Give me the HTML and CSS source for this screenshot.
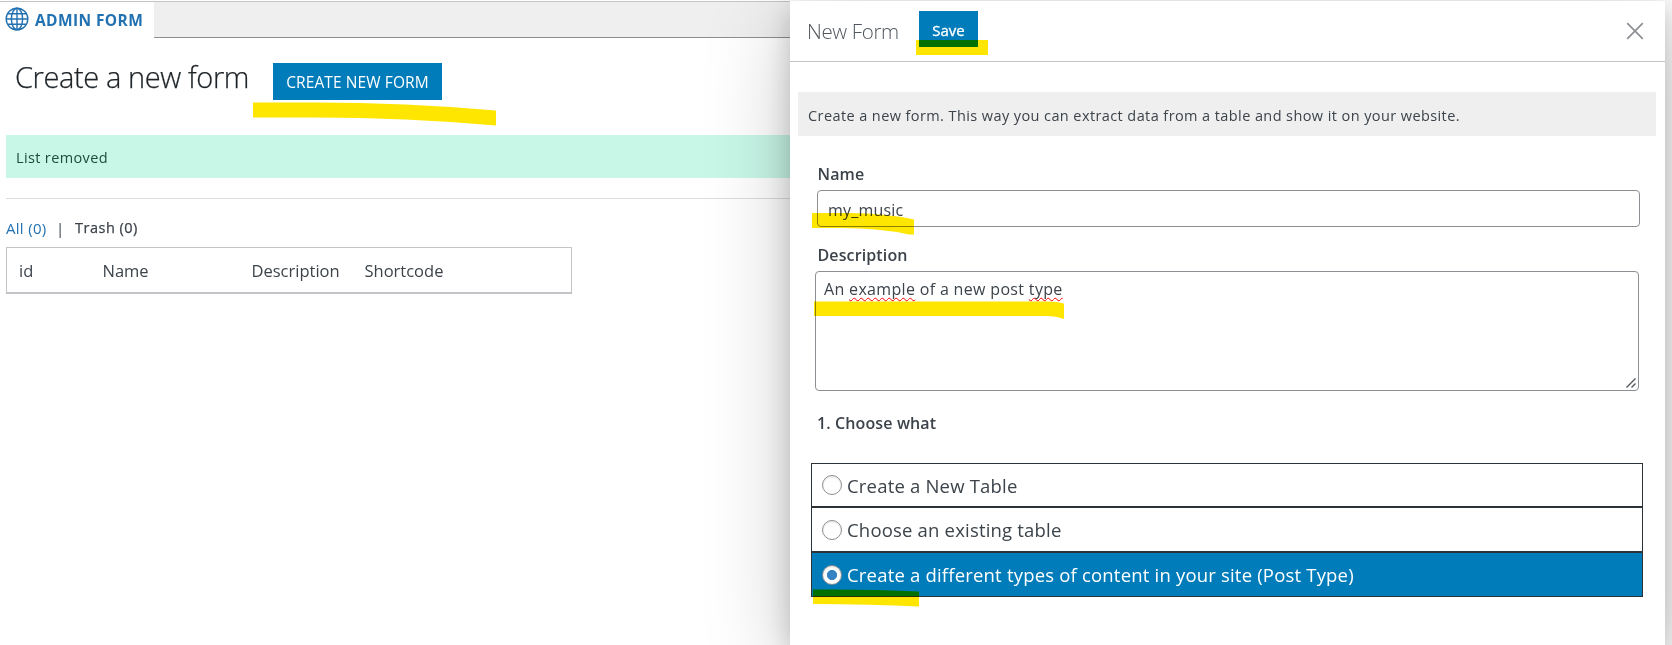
FILE: index.html
```html
<!DOCTYPE html>
<html lang="en">
<head>
<meta charset="utf-8">
<title>Admin Form</title>
<link rel="stylesheet" href="styles.css">
</head>
<body>
<div class="app">
  <main class="page">
    <nav class="tabs">
      <a class="tab">
        <svg class="globe" viewBox="0 0 24 24"><circle cx="12" cy="12" r="10.8"/><ellipse cx="12" cy="12" rx="5.6" ry="10.8"/><path d="M12 1.2v21.6M1.2 12h21.6M2.8 6.8h18.4M2.8 17.2h18.4"/></svg>
        <span class="tab-text">ADMIN FORM</span>
      </a>
      <div class="tab-fill"></div>
    </nav>
    <header class="heading">
      <h1 class="title">Create a new form</h1>
      <button class="btn create">CREATE NEW FORM</button>
    </header>
    <div class="notice"><span class="notice-text">List removed</span></div>
    <div class="filters"><a class="all">All (0)</a><span class="bar">|</span><span class="trash">Trash (0)</span></div>
    <div class="table">
      <span class="c-id">id</span><span class="c-name">Name</span><span class="c-desc">Description</span><span class="c-code">Shortcode</span>
    </div>
  </main>
  <section class="panel">
    <header class="panel-head">
      <h2 class="panel-title">New Form</h2>
      <button class="btn save">Save</button>
      <svg class="close" viewBox="0 0 18 18"><path d="M1.2 1.2l15.6 15.6M16.8 1.2L1.2 16.8"/></svg>
    </header>
    <div class="info"><span class="info-text">Create a new form. This way you can extract data from a table and show it on your website.</span></div>
    <div class="label name-label"><span>Name</span></div>
    <div class="input"><span>my_music</span></div>
    <div class="label desc-label"><span>Description</span></div>
    <div class="area">
      <span class="area-text">An <u class="typo">example</u> of a new post <u class="typo">type</u></span>
      <svg class="grip" viewBox="0 0 10 10"><path d="M.5 9.5l9-9M5.5 9.5l4-4"/></svg>
    </div>
    <div class="label choose"><span>1. Choose what</span></div>
    <div class="options">
      <div class="option"><i class="radio"></i><span>Create a New Table</span></div>
      <div class="option"><i class="radio"></i><span>Choose an existing table</span></div>
      <div class="option selected"><i class="radio"></i><span>Create a different types of content in your site (Post Type)</span></div>
    </div>
  </section>
  <svg class="marker" viewBox="0 0 1672 645">
    <path d="M253 102.5H315Q405 102.5 496 110.5V125.5Q405 117.5 315 117.5H253Z"/>
    <path d="M916 40H988V55H916Z"/>
    <path d="M812 213H850Q885 213 914 219.5V234.5H909Q880 228 842 228H812Z"/>
    <path d="M814 301.5H1046Q1058 301.5 1064 303.5V319Q1056 316 1046 316H814Z"/>
    <path d="M813 589.5Q870 589 919 591.5V606.5Q870 604 813 604Z"/>
  </svg>
</div>
</body>
</html>
```
FILE: styles.css
```css
* { box-sizing: border-box; }
body { margin: 0; background: #fff; font-family: "Open Sans", "Noto Sans", sans-serif; color: #3c434a; }
h1, h2 { margin: 0; }
.app { position: relative; display: flex; width: 1672px; height: 645px; overflow: hidden; padding-top: 1px; }
.page { width: 790px; flex: none; border-top: 1px solid #c3c4c7; }
.tabs { display: flex; height: 36px; }
.tab { width: 154px; display: flex; align-items: center; padding-left: 5px; color: #2271b1; white-space: nowrap; }
.globe { width: 24px; height: 24px; margin: -2px 6px 0 0; fill: none; stroke: #2271b1; stroke-width: 1.4; }
.tab-text { font-size: 15.5px; font-weight: 700; letter-spacing: .4px; }
.tab-fill { flex: 1; background: #efefef; border-bottom: 1px solid #8c8f94; }
.heading { display: flex; align-items: flex-start; height: 97px; padding-left: 15px; }
.title { width: 258px; padding-top: 19px; font-size: 29px; line-height: 40px; font-weight: 300; color: #1d2327; white-space: nowrap; letter-spacing: -.4px; -webkit-text-stroke: .25px #1d2327; }
.btn { border: 0; padding: 0; background: #007cba; color: #fff; font-family: inherit; white-space: nowrap; }
.create { width: 169px; height: 37px; margin-top: 25px; padding-top: 1px; font-size: 15.5px; letter-spacing: .1px; }
.notice { margin-left: 6px; height: 43px; padding-left: 10px; background: #c8f7e8; color: #1f4a3d; font-size: 14.5px; line-height: 46px; letter-spacing: .36px; }
.filters { margin: 20px 0 0 6px; height: 49px; border-top: 1px solid #dcdcde; display: flex; padding-top: 18px; font-size: 15px; line-height: 22px; white-space: nowrap; }
.all { width: 50px; color: #2271b1; letter-spacing: .3px; }
.bar { width: 19px; }
.trash { font-size: 14.5px; font-weight: 500; letter-spacing: .5px; -webkit-text-stroke: .25px #3c434a; }
.table { margin-left: 6px; width: 566px; height: 47px; border: 1px solid #c3c4c7; border-bottom-width: 2px; display: grid; grid-template-columns: 83.5px 149px 113px 1fr; padding-left: 12px; font-size: 16.5px; line-height: 45px; }
.panel { width: 875px; flex: none; background: #fff; box-shadow: 0 20px 80px rgba(0,0,0,.22), 0 8px 24px rgba(0,0,0,.18); display: flex; flex-direction: column; }
.panel-head { flex: none; display: flex; height: 61px; border-bottom: 1px solid #c3c4c7; padding: 10px 21px 0 17px; }
.panel-title { width: 112px; font-size: 20.5px; line-height: 40px; font-weight: 300; color: #50575e; white-space: nowrap; letter-spacing: -.35px; }
.save { width: 59px; height: 36px; padding-top: 1px; font-size: 15px; font-weight: 500; -webkit-text-stroke: .3px #fff; }
.close { width: 18px; height: 18px; margin: 11px 0 0 auto; fill: none; stroke: #8c8f94; stroke-width: 1.7; }
.info { flex: none; margin: 30px 9px 0 8px; height: 44px; padding-left: 10px; background: #efefef; font-size: 14.5px; line-height: 48px; white-space: nowrap; letter-spacing: .41px; }
.label { flex: none; padding-left: 27.5px; font-size: 16px; font-weight: 600; line-height: 22px; white-space: nowrap; letter-spacing: .12px; }
.name-label { margin-top: 27px; height: 27px; }
.input { flex: none; margin: 0 25px 0 27px; height: 37px; border: 1px solid #8c8f94; border-radius: 4px; padding-left: 10px; font-size: 16px; line-height: 38px; letter-spacing: .2px; }
.desc-label { margin-top: 17px; height: 27px; }
.area { flex: none; margin: 0 26px 0 25px; height: 120px; border: 1px solid #8c8f94; border-radius: 4px; display: flex; justify-content: space-between; padding: 5px 2px 2px 8px; font-size: 16px; line-height: 24px; white-space: nowrap; letter-spacing: .33px; }
.typo { text-decoration: underline wavy #f00 1.4px; text-decoration-skip-ink: none; text-underline-offset: 2px; }
.grip { width: 10px; height: 10px; align-self: flex-end; fill: none; stroke: #50575e; stroke-width: 1.4; }
.choose { margin-top: 21px; height: 51px; padding-left: 27px; }
.options { margin: 0 22px 0 21px; }
.option { height: 45px; border: 1px solid #2c3338; display: flex; align-items: center; padding-left: 10px; font-size: 18.5px; white-space: nowrap; letter-spacing: .19px; }
.option:first-child { height: 44px; }
.radio { width: 20px; height: 20px; margin-right: 5px; border: 1px solid #8c8f94; border-radius: 50%; background: #fff; box-shadow: inset 0 1px 2px rgba(0,0,0,.12); }
.selected { background: #007cba; color: #fff; }
.selected .radio { background: radial-gradient(circle, #3582c4 4.7px, #fff 5.4px); }
.marker { position: absolute; left: 0; top: 0; width: 1672px; height: 645px; fill: #ffe600; mix-blend-mode: multiply; pointer-events: none; }
```
